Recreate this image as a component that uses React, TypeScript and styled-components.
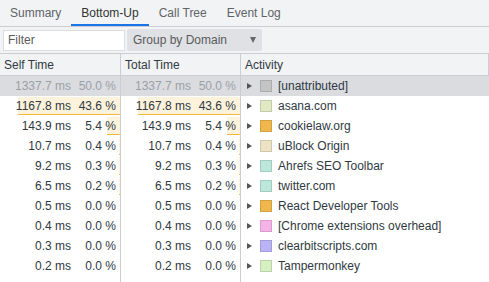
import React from 'react';
import styled, { createGlobalStyle } from 'styled-components';

const GlobalStyle = createGlobalStyle`
  html, body {
    margin: 0;
    padding: 0;
    background: #ffffff;
  }
  body {
    font-family: "Liberation Sans", Arial, sans-serif;
    font-size: 12px;
    color: #303942;
  }
`;

interface Row {
  self: number;
  selfPct: string;
  total: number;
  totalPct: string;
  name: string;
  swatch: string;
  selected?: boolean;
}

const rows: Row[] = [
  { self: 1337.7, selfPct: '50.0', total: 1337.7, totalPct: '50.0', name: '[unattributed]', swatch: '#c4c4c4', selected: true },
  { self: 1167.8, selfPct: '43.6', total: 1167.8, totalPct: '43.6', name: 'asana.com', swatch: '#e0e8c4' },
  { self: 143.9, selfPct: '5.4', total: 143.9, totalPct: '5.4', name: 'cookielaw.org', swatch: '#f0b84c' },
  { self: 10.7, selfPct: '0.4', total: 10.7, totalPct: '0.4', name: 'uBlock Origin', swatch: '#ece3c4' },
  { self: 9.2, selfPct: '0.3', total: 9.2, totalPct: '0.3', name: 'Ahrefs SEO Toolbar', swatch: '#bbe8da' },
  { self: 6.5, selfPct: '0.2', total: 6.5, totalPct: '0.2', name: 'twitter.com', swatch: '#bbe8da' },
  { self: 0.5, selfPct: '0.0', total: 0.5, totalPct: '0.0', name: 'React Developer Tools', swatch: '#f0b84c' },
  { self: 0.4, selfPct: '0.0', total: 0.4, totalPct: '0.0', name: '[Chrome extensions overhead]', swatch: '#f6b2e8' },
  { self: 0.3, selfPct: '0.0', total: 0.3, totalPct: '0.0', name: 'clearbitscripts.com', swatch: '#bab3f6' },
  { self: 0.2, selfPct: '0.0', total: 0.2, totalPct: '0.0', name: 'Tampermonkey', swatch: '#d6f0c2' },
];

const MAX = 1337.7;
const BAR_SPAN = 117;

const Panel = styled.div`
  width: 489px;
  height: 282px;
  overflow: hidden;
  display: flex;
  flex-direction: column;
`;

const TabBar = styled.div`
  height: 26px;
  flex: none;
  display: flex;
  align-items: stretch;
  background: #f1f3f4;
  border-bottom: 1px solid #cacdd1;
`;

const Tab = styled.div<{ $active?: boolean }>`
  position: relative;
  display: flex;
  align-items: center;
  padding: 0 10px;
  color: ${(p) => (p.$active ? '#333333' : '#5f6368')};
  &::after {
    content: '';
    display: ${(p) => (p.$active ? 'block' : 'none')};
    position: absolute;
    left: 0;
    right: 0;
    bottom: 0;
    height: 2px;
    background: #1a73e8;
  }
`;

const Toolbar = styled.div`
  height: 26px;
  flex: none;
  display: flex;
  align-items: center;
  gap: 2px;
  padding-left: 3px;
  background: #f1f3f4;
  border-bottom: 1px solid #cacdd1;
`;

const FilterBox = styled.div`
  box-sizing: border-box;
  width: 122px;
  height: 21px;
  background: #ffffff;
  border: 1px solid #dadce0;
  display: flex;
  align-items: center;
  padding-left: 4px;
  color: #5a5a5a;
`;

const Select = styled.div`
  box-sizing: border-box;
  width: 135px;
  height: 22px;
  background: #dfe1e5;
  border-radius: 2px;
  display: flex;
  align-items: center;
  justify-content: space-between;
  padding: 0 6px 0 6px;
  color: #5a5a5a;
`;

const Arrow = styled.span`
  width: 0;
  height: 0;
  border-left: 3.5px solid transparent;
  border-right: 3.5px solid transparent;
  border-top: 6px solid #666666;
`;

const Grid = styled.div`
  flex: 1;
  display: grid;
  grid-template-columns: 121px 120px 1fr;
  grid-template-rows: 22px repeat(${rows.length}, 20px) 1fr;
`;

const HeaderCell = styled.div`
  display: flex;
  align-items: center;
  padding-left: 4px;
  background: #f1f3f4;
  border-bottom: 1px solid #cacdd1;
  border-right: 1px solid #cacdd1;
  color: #303942;
  &:last-child {
    border-right: none;
  }
`;

const TimeCell = styled.div<{ $selected?: boolean }>`
  position: relative;
  display: flex;
  align-items: center;
  justify-content: flex-end;
  padding-right: 4px;
  border-right: 1px solid #cacdd1;
  background: ${(p) => (p.$selected ? '#dadce0' : '#ffffff')};
  color: ${(p) => (p.$selected ? '#9aa0a6' : '#303942')};
`;

const FillerCell = styled.div<{ $last?: boolean }>`
  border-right: ${(p) => (p.$last ? 'none' : '1px solid #cacdd1')};
`;

const Bar = styled.div`
  position: absolute;
  right: 0;
  top: 1px;
  bottom: 1px;
  background: #fdf3dc;
  border-bottom: 1px solid #f2b83c;
  box-sizing: border-box;
`;

const Ms = styled.span`
  position: relative;
  white-space: pre;
`;

const Pct = styled.span`
  position: relative;
  width: 45px;
  text-align: right;
  white-space: pre;
`;

const ActivityCell = styled.div<{ $selected?: boolean }>`
  display: flex;
  align-items: center;
  padding-left: 6px;
  background: ${(p) => (p.$selected ? '#dadce0' : '#ffffff')};
  color: #303942;
`;

const Triangle = styled.span`
  width: 0;
  height: 0;
  border-top: 3.5px solid transparent;
  border-bottom: 3.5px solid transparent;
  border-left: 5px solid #555555;
  margin-right: 8px;
`;

const Swatch = styled.span<{ $color: string }>`
  box-sizing: border-box;
  width: 12px;
  height: 12px;
  background: ${(p) => p.$color};
  border: 1px solid rgba(0, 0, 0, 0.12);
  margin-right: 6px;
`;

const TimeValue = ({ value, pct, selected }: { value: number; pct: string; selected?: boolean }) => {
  const w = Math.round((value / MAX) * BAR_SPAN);
  return (
    <TimeCell $selected={selected}>
      {!selected && w > 0 && <Bar style={{ width: `${w}px` }} />}
      <Ms>{value.toFixed(1)} ms</Ms>
      <Pct>{pct} %</Pct>
    </TimeCell>
  );
};

export default function App() {
  return (
    <>
      <GlobalStyle />
      <Panel>
        <TabBar>
          <Tab>Summary</Tab>
          <Tab $active>Bottom-Up</Tab>
          <Tab>Call Tree</Tab>
          <Tab>Event Log</Tab>
        </TabBar>
        <Toolbar>
          <FilterBox>Filter</FilterBox>
          <Select>
            <span>Group by Domain</span>
            <Arrow />
          </Select>
        </Toolbar>
        <Grid>
          <HeaderCell>Self Time</HeaderCell>
          <HeaderCell>Total Time</HeaderCell>
          <HeaderCell>Activity</HeaderCell>
          {rows.map((r) => (
            <React.Fragment key={r.name}>
              <TimeValue value={r.self} pct={r.selfPct} selected={r.selected} />
              <TimeValue value={r.total} pct={r.totalPct} selected={r.selected} />
              <ActivityCell $selected={r.selected}>
                <Triangle />
                <Swatch $color={r.swatch} />
                {r.name}
              </ActivityCell>
            </React.Fragment>
          ))}
          <FillerCell />
          <FillerCell />
          <FillerCell $last />
        </Grid>
      </Panel>
    </>
  );
}
